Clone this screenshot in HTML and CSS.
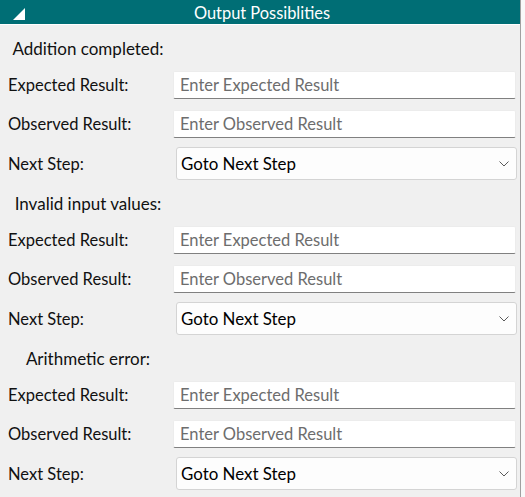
FILE: index.html
```html
<!DOCTYPE html>
<html>
<head>
<meta charset="utf-8">
<link rel="stylesheet" href="styles.css">
</head>
<body>
<div class="panel">
  <div class="titlebar">
    <svg class="collapse" width="12" height="12" viewBox="0 0 12 12"><polygon points="12,0 12,12 0,12" fill="#ffffff"/></svg>
    <span class="title">Output Possiblities</span>
  </div>

  <section class="group">
    <div class="group-heading">Addition completed:</div>
    <div class="row r1"><span class="label">Expected Result:</span><div class="input">Enter Expected Result</div></div>
    <div class="row r2"><span class="label">Observed Result:</span><div class="input">Enter Observed Result</div></div>
    <div class="row r3"><span class="label">Next Step:</span><div class="select"><span>Goto Next Step</span><svg class="chev" width="10" height="6" viewBox="0 0 10 6"><polyline points="0.5,0.5 5,5 9.5,0.5" fill="none" stroke="#5a5a5a" stroke-width="1"/></svg></div></div>
  </section>

  <section class="group">
    <div class="group-heading">Invalid input values:</div>
    <div class="row r1"><span class="label">Expected Result:</span><div class="input">Enter Expected Result</div></div>
    <div class="row r2"><span class="label">Observed Result:</span><div class="input">Enter Observed Result</div></div>
    <div class="row r3"><span class="label">Next Step:</span><div class="select"><span>Goto Next Step</span><svg class="chev" width="10" height="6" viewBox="0 0 10 6"><polyline points="0.5,0.5 5,5 9.5,0.5" fill="none" stroke="#5a5a5a" stroke-width="1"/></svg></div></div>
  </section>

  <section class="group">
    <div class="group-heading">Arithmetic error:</div>
    <div class="row r1"><span class="label">Expected Result:</span><div class="input">Enter Expected Result</div></div>
    <div class="row r2"><span class="label">Observed Result:</span><div class="input">Enter Observed Result</div></div>
    <div class="row r3"><span class="label">Next Step:</span><div class="select"><span>Goto Next Step</span><svg class="chev" width="10" height="6" viewBox="0 0 10 6"><polyline points="0.5,0.5 5,5 9.5,0.5" fill="none" stroke="#5a5a5a" stroke-width="1"/></svg></div></div>
  </section>
</div>
</body>
</html>
```

FILE: styles.css
```css
html, body {
  margin: 0;
  padding: 0;
  background: #f9f9f9;
}
body {
  font-family: "Lato", "Noto Sans", sans-serif;
  font-size: 16.5px;
  color: #111111;
}
.panel {
  width: 520px;
  height: 497px;
  background: #f0f0f0;
  border-right: 1px solid #a0a0a0;
}
.titlebar {
  position: relative;
  height: 24px;
  background: #006e75;
  border-bottom: 1px solid #ffffff;
  display: flex;
  align-items: center;
  justify-content: center;
}
.collapse {
  position: absolute;
  left: 13px;
  top: 8px;
}
.title {
  color: #ffffff;
  font-size: 16.4px;
  margin-left: 4px;
}
.group {
  display: flex;
  flex-direction: column;
}
.group-heading {
  height: 46px;
  width: 176px;
  font-size: 17px;
  display: flex;
  align-items: center;
  justify-content: center;
}
.row {
  display: flex;
  align-items: center;
  padding-left: 8px;
}
.r1 { height: 28px; }
.r2 { height: 28px; margin-top: 11px; }
.r3 { height: 33px; margin-top: 9px; }
.label {
  width: 165px;
  white-space: nowrap;
}
.input {
  box-sizing: border-box;
  width: 343px;
  height: 28px;
  background: #ffffff;
  border: 1px solid #ececec;
  border-bottom: 1px solid #808080;
  border-radius: 2px;
  color: #6d6d6d;
  padding-left: 6px;
  display: flex;
  align-items: center;
}
.select {
  box-sizing: border-box;
  width: 341px;
  height: 33px;
  margin-left: 3px;
  background: #fdfdfd;
  border: 1px solid #d4d4d4;
  border-radius: 3px;
  color: #000000;
  font-size: 16.9px;
  padding-left: 4px;
  padding-right: 7px;
  display: flex;
  align-items: center;
  justify-content: space-between;
}
.chev {
  display: block;
}
```
